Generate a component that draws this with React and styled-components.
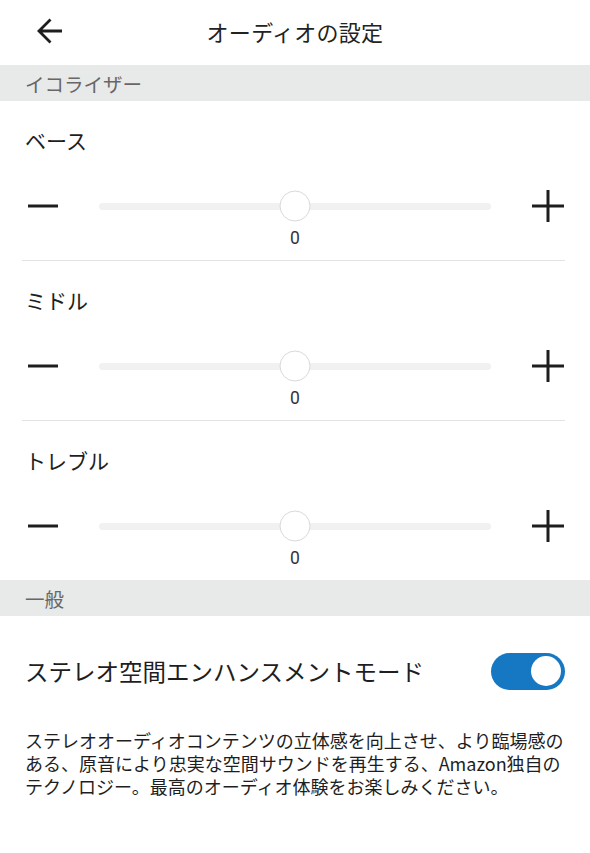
import React, { useState } from 'react'
import styled, { createGlobalStyle } from 'styled-components'

const Global = createGlobalStyle`
body{
margin:0;
background:#fff;
font-family:"Noto Sans CJK JP","Noto Sans",sans-serif;
color:#1e1e1e;
}
`

const Page = styled.div`
width:590px;
min-height:853px;
background:#fff;
`

const Header = styled.div`
height:65px;
box-sizing:border-box;
padding-bottom:3px;
display:grid;
grid-template-columns:1fr auto 1fr;
align-items:center;
`

const Back = styled.button`
justify-self:start;
margin-left:35px;
border:none;
background:none;
padding:0;
display:flex;
cursor:pointer;
`

const Title = styled.div`
font-size:22px;
letter-spacing:0.3px;
color:#222;
`

const SectionHead = styled.div`
height:36px;
background:#e8e9e9;
display:flex;
align-items:center;
padding-left:25px;
font-size:19.5px;
color:#676767;
`

const Block = styled.div`
margin:0 25px 0 22px;
padding:25px 0 12px;
border-bottom:${p => (p.last ? 'none' : '1px solid #e3e3e3')};
`

const Label = styled.div`
font-size:21px;
line-height:28px;
padding-left:3px;
color:#1e1e1e;
`

const SliderGrid = styled.div`
margin-top:32px;
display:grid;
grid-template-columns:77px 1fr 74px;
grid-template-rows:40px 20px;
row-gap:2px;
align-items:center;
`

const IconBtn = styled.button`
border:none;
background:none;
padding:0;
display:flex;
justify-self:${p => (p.end ? 'end' : 'start')};
margin-left:${p => (p.end ? '0' : '5px')};
cursor:pointer;
`

const Track = styled.div`
position:relative;
height:7px;
border-radius:4px;
background:#f1f1f1;
`

const Thumb = styled.div`
position:absolute;
top:50%;
width:29px;
height:29px;
border-radius:50%;
background:#fff;
border:1.5px solid #d9d9d9;
transform:translate(-50%,-50%);
`

const Value = styled.div`
grid-column:2;
text-align:center;
font-size:17.5px;
line-height:20px;
color:#333;
font-family:"Roboto","Noto Sans",sans-serif;
`

const ToggleRow = styled.div`
height:110px;
display:flex;
align-items:center;
justify-content:space-between;
padding:0 25px;
`

const ToggleLabel = styled.div`
font-size:23.5px;
color:#1e1e1e;
`

const Switch = styled.button`
width:74px;
height:37px;
border-radius:19px;
border:none;
padding:0 4px;
display:flex;
align-items:center;
justify-content:${p => (p.on ? 'flex-end' : 'flex-start')};
background:${p => (p.on ? '#1677c2' : '#bbb')};
cursor:pointer;
`

const Knob = styled.span`
width:30px;
height:30px;
border-radius:50%;
background:#fff;
`

const Desc = styled.p`
margin:3px 0 0;
padding:0 24px 0 25px;
font-size:18px;
line-height:23px;
color:#1e1e1e;
`

const Minus = () => (
  <svg width="32" height="32" viewBox="0 0 32 32">
    <path d="M1 16h30" stroke="#1e1e1e" strokeWidth="3" />
  </svg>
)

const Plus = () => (
  <svg width="34" height="34" viewBox="0 0 34 34">
    <path d="M1 17h32M17 1v32" stroke="#1e1e1e" strokeWidth="3" />
  </svg>
)

const bands = ['ベース', 'ミドル', 'トレブル']

const App = () => {
  const [vals, setVals] = useState([0, 0, 0])
  const [on, setOn] = useState(true)

  const step = (i, d) =>
    setVals(v => v.map((x, j) => (j === i ? Math.max(-6, Math.min(6, x + d)) : x)))

  return (
    <Page>
      <Global />
      <Header>
        <Back aria-label="戻る">
          <svg width="30" height="30" viewBox="0 0 30 30">
            <path d="M27 15H4M15.5 3.5L4 15l11.5 11.5" fill="none" stroke="#1e1e1e" strokeWidth="2.8" />
          </svg>
        </Back>
        <Title>オーディオの設定</Title>
        <div />
      </Header>
      <SectionHead>イコライザー</SectionHead>
      {bands.map((b, i) => (
        <Block key={b} last={i === bands.length - 1}>
          <Label>{b}</Label>
          <SliderGrid>
            <IconBtn onClick={() => step(i, -1)}>
              <Minus />
            </IconBtn>
            <Track>
              <Thumb style={{ left: `${((vals[i] + 6) / 12) * 100}%` }} />
            </Track>
            <IconBtn end onClick={() => step(i, 1)}>
              <Plus />
            </IconBtn>
            <Value>{vals[i]}</Value>
          </SliderGrid>
        </Block>
      ))}
      <SectionHead>一般</SectionHead>
      <ToggleRow>
        <ToggleLabel>ステレオ空間エンハンスメントモード</ToggleLabel>
        <Switch on={on} onClick={() => setOn(!on)}>
          <Knob />
        </Switch>
      </ToggleRow>
      <Desc>
        ステレオオーディオコンテンツの立体感を向上させ、より臨場感の<br />
        ある、原音により忠実な空間サウンドを再生する、Amazon独自の<br />
        テクノロジー。最高のオーディオ体験をお楽しみください。
      </Desc>
    </Page>
  )
}

export default App
